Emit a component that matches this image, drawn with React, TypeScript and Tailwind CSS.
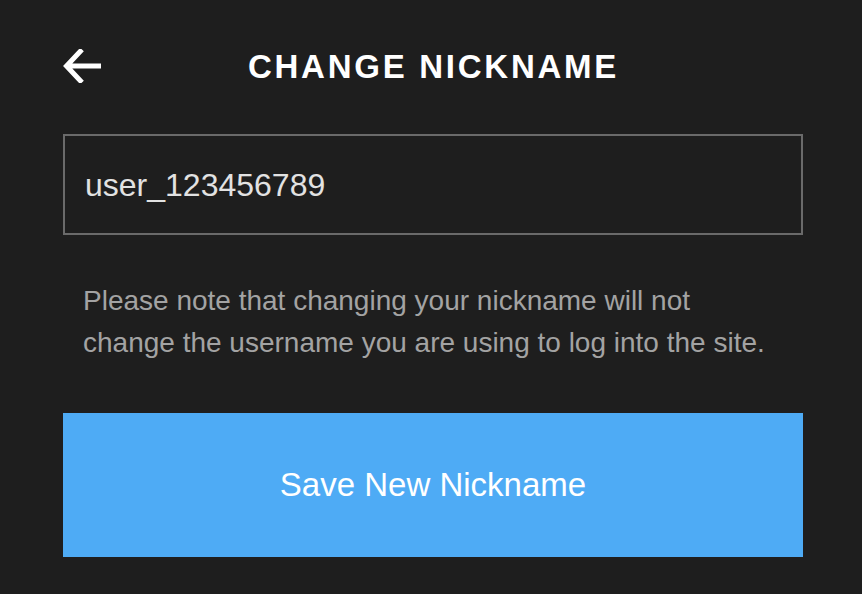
export default function App() {
  return (
    <div
      className="min-h-[594px] w-full bg-[#1e1e1e] pl-[63px] pr-[59px] pt-[48px]"
      style={{ fontFamily: '"Liberation Sans", Arial, sans-serif' }}
    >
      <header className="relative flex h-[36px] items-center justify-center">
        <button className="absolute left-0 top-[1px] text-white" aria-label="Back">
          <svg width="38" height="34" viewBox="0 0 38 34" fill="none">
            <path
              d="M38 17H6M19 0.5L3.5 17l15.5 16.5"
              stroke="white"
              strokeWidth="5"
              strokeLinecap="butt"
              strokeLinejoin="miter"
            />
          </svg>
        </button>
        <h1 className="ml-[1px] text-[33px] font-bold tracking-[0.083em] text-white leading-none">
          CHANGE NICKNAME
        </h1>
      </header>

      <div className="mt-[50px] flex h-[101px] items-center border-2 border-[#6a6a6a] pl-[20px] pr-[21px]">
        <span className="text-[32px] text-[#e2e2e2]">user_123456789</span>
      </div>

      <p className="mt-[45px] px-[20px] text-[28px] leading-[42px] text-[#a3a3a3]">
        Please note that changing your nickname will not
        <br />
        change the username you are using to log into the site.
      </p>

      <button className="mt-[49px] flex h-[144px] w-full items-center justify-center bg-[#4eabf5] text-[33px] text-white">
        Save New Nickname
      </button>
    </div>
  )
}
